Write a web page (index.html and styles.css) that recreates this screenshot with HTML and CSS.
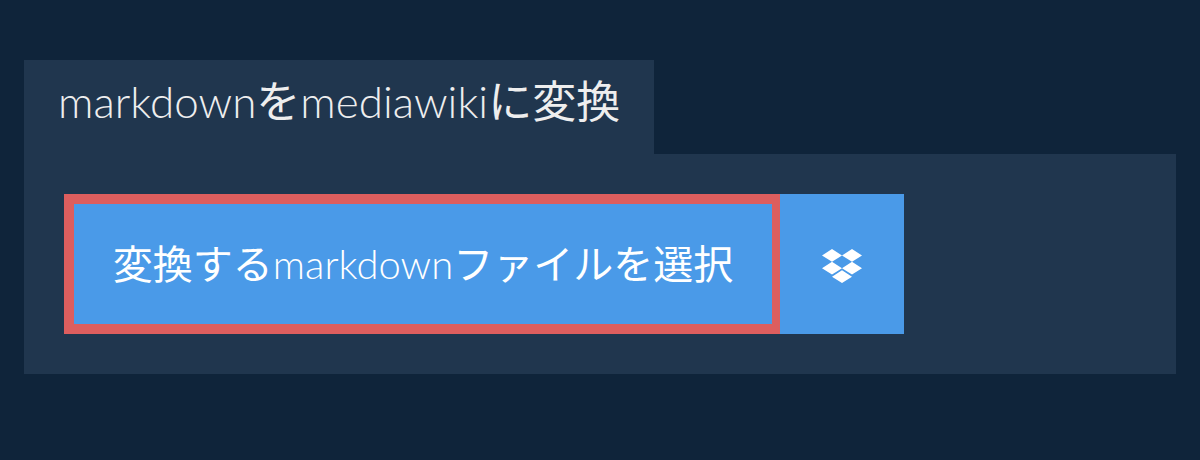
FILE: index.html
```html
<!DOCTYPE html>
<html lang="ja">
  <head>
    <meta charset="UTF-8" />
    <meta name="viewport" content="width=device-width, initial-scale=1.0" />
    <title>markdownをmediawikiに変換</title>
    <link rel="stylesheet" href="styles.css">
  </head>
  <body>
    <h1 class="tab"><span class="latin">markdown</span>を<span class="latin">mediawiki</span>に変換</h1>
    <div class="panel">
      <div class="picker">
        <button class="chooseBtn">変換する<span class="latin">markdown</span>ファイルを選択</button>
        <button class="dropboxBtn" aria-label="Dropbox">
          <svg class="dropboxIcon" viewBox="0 0 40 36" width="40" height="36">
            <path fill="#fff" d="M10 0 0 6.4l10 6.4 10-6.4zM30 0 20 6.4l10 6.4 10-6.4zM0 19.2l10 6.4 10-6.4-10-6.4zM30 12.8l-10 6.4 10 6.4 10-6.4zM10 27.7l10 6.4 10-6.4-10-6.4z"/>
          </svg>
        </button>
      </div>
    </div>
  </body>
</html>
```

FILE: styles.css
```css
body {
  margin: 0;
  padding: 60px 24px 0;
  background-color: #0f243a;
  font-family: "Lato", "Noto Sans CJK JP", sans-serif;
}

.latin {
  font-weight: 300;
}

.tab {
  width: fit-content;
  margin: 0;
  padding: 13px 34px 0;
  height: 94px;
  box-sizing: border-box;
  background-color: #20364e;
  color: #eeeeee;
  font-size: 44px;
  font-weight: 400;
  line-height: 56px;
}

.panel {
  background-color: #20364e;
  padding: 40px;
  height: 220px;
  box-sizing: border-box;
}

.picker {
  display: flex;
}

button {
  height: 140px;
  border: none;
  background-color: #4a9ae8;
  color: #ffffff;
  font-family: inherit;
  cursor: pointer;
}

.chooseBtn {
  width: 716px;
  border: solid #dd5e5e;
  border-width: 10px 8px 10px 10px;
  font-size: 40px;
  font-weight: 400;
  padding: 0 0 4px;
}

.dropboxBtn {
  width: 124px;
  padding: 6px 0 0;
  display: flex;
  align-items: center;
  justify-content: center;
}
```
